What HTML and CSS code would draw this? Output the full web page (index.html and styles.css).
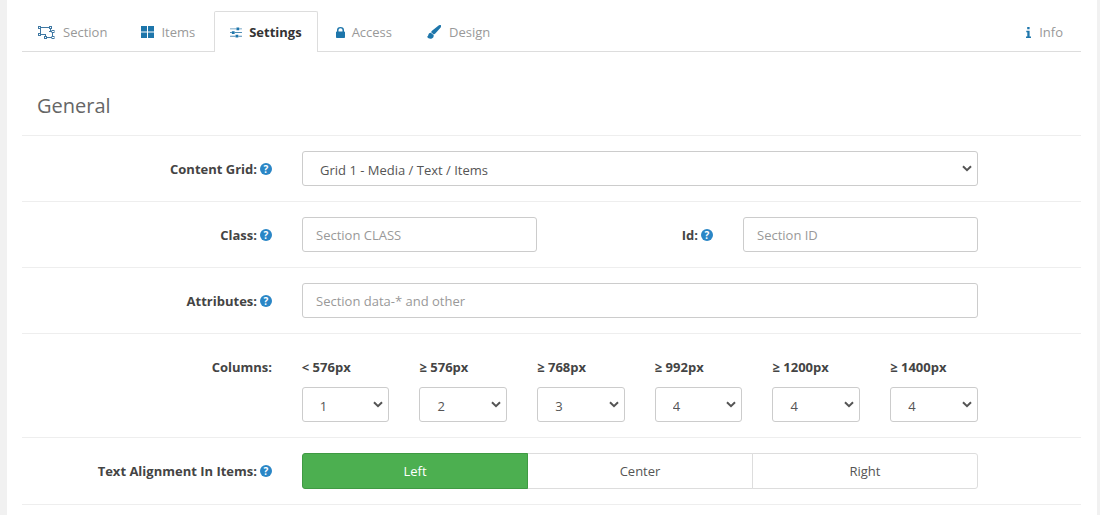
FILE: index.html
```html
<!DOCTYPE html>
<html lang="en">
<head>
<meta charset="utf-8">
<title>Section Settings</title>
<link rel="stylesheet" href="styles.css">
</head>
<body>
<main class="panel">
  <nav class="tabs">
    <a class="tab"><svg class="ico ico-section" viewBox="0 0 17 15"><g fill="#fff" stroke="#3f78a3" stroke-width="1"><path fill="none" d="M2 2.500h10M2.500 3v6M2 9.500h5M12.500 3v3M7.500 9v3M7 12.500h8M14.500 7v5M11 6.500h4"/><rect x=".5" y="1.500" width="2" height="2"/><rect x="11.500" y="1.500" width="2" height="2"/><rect x=".5" y="8.500" width="2" height="2"/><rect x="14" y="5.500" width="2" height="2"/><rect x="6.500" y="11.500" width="2" height="2"/><rect x="14" y="11.500" width="2" height="2"/></g></svg>Section</a>
    <a class="tab tab-wide"><svg class="ico ico-items" viewBox="0 0 13 12"><path fill="#1e76ab" d="M0 0h6v5.500H0zM7 0h6v5.500H7zM0 6.500h6V12H0zM7 6.500h6V12H7z"/></svg>Items</a>
    <a class="tab active"><svg class="ico ico-sliders" viewBox="0 0 13 12"><path fill="#4f8cb5" d="M0 1.500h7v1H0zM10 1.500h3v1h-3zM0 5.500h2v1H0zM5 5.500h8v1H5zM0 9.500h6v1H0zM9 9.500h4v1H9z"/><path fill="#1e76ab" d="M7 .5h3v3H7zM2 4.500h3v3H2zM6 8.500h3v3H6z"/></svg>Settings</a>
    <a class="tab tab-wide"><svg class="ico ico-lock" viewBox="0 0 9 11"><path fill="#1e76ab" d="M1 4.500V3a3.500 3 0 0 1 7 0v1.500h.2a.8.8 0 0 1 .8.8V10.200a.8.8 0 0 1-.8.800H.8a.8.8 0 0 1-.8-.8V5.300a.8.8 0 0 1 .8-.8zM2.500 4.500h4V3a2 1.700 0 0 0-4 0z"/></svg>Access</a>
    <a class="tab"><svg class="ico ico-brush" viewBox="0 0 14 14"><path fill="#1e76ab" d="M13.800.2c-.6-.5-1.500-.2-2.200.3L5 5.700c-.5.400-.8.900-.9 1.500l2.700 2.300c.6-.1 1.100-.4 1.500-.9L13.700 2.400c.5-.8.700-1.600.1-2.200zM3.800 7.700C2.200 7.900 1.400 8.900 1.200 10.300c-.1.800-.5 1.300-1.200 1.500 1 1.600 3 2.300 4.800 1.700 1.500-.5 2.200-2 1.800-3.500z"/></svg>Design</a>
    <a class="tab tab-end"><svg class="ico ico-info" viewBox="0 0 5 11"><path fill="#1e76ab" d="M1.200 0h2.400v2.300H1.200zM.3 3.800h3.300v5.700H5V11H0V9.500h1.300V5.300H.3z"/></svg>Info</a>
  </nav>

  <h2 class="heading">General</h2>

  <section class="row">
    <div class="label"><b>Content Grid:</b><span class="help">?</span></div>
    <div class="control">
      <select class="field select"><option>Grid 1 - Media / Text / Items</option></select>
    </div>
  </section>

  <section class="row">
    <div class="label"><b>Class:</b><span class="help">?</span></div>
    <div class="control split">
      <input class="field" placeholder="Section CLASS">
      <div class="label label-inner"><b>Id:</b><span class="help">?</span></div>
      <input class="field" placeholder="Section ID">
    </div>
  </section>

  <section class="row">
    <div class="label"><b>Attributes:</b><span class="help">?</span></div>
    <div class="control">
      <input class="field" placeholder="Section data-* and other">
    </div>
  </section>

  <section class="row row-top">
    <div class="label"><b>Columns:</b></div>
    <div class="control columns">
      <label class="col"><b>&lt; 576px</b><select class="field select"><option>1</option></select></label>
      <label class="col"><b>≥ 576px</b><select class="field select"><option>2</option></select></label>
      <label class="col"><b>≥ 768px</b><select class="field select"><option>3</option></select></label>
      <label class="col"><b>≥ 992px</b><select class="field select"><option>4</option></select></label>
      <label class="col"><b>≥ 1200px</b><select class="field select"><option>4</option></select></label>
      <label class="col"><b>≥ 1400px</b><select class="field select"><option>4</option></select></label>
    </div>
  </section>

  <section class="row">
    <div class="label"><b>Text Alignment In Items:</b><span class="help">?</span></div>
    <div class="control segments">
      <button class="seg on">Left</button>
      <button class="seg">Center</button>
      <button class="seg">Right</button>
    </div>
  </section>
</main>
</body>
</html>
```
FILE: styles.css
```css
* { box-sizing: border-box; }
html, body { height: 100%; }
body {
  margin: 0;
  background: #f1f1f1;
  font-family: "Open Sans", "Liberation Sans", sans-serif;
  font-size: 13px;
  color: #555;
  overflow: hidden;
}
.panel {
  margin: 0 3px 0 7px;
  background: #fff;
  padding: 11px 16px 0 15px;
  min-height: 100%;
}
.tabs {
  display: flex;
  gap: 2px;
  height: 41px;
  border-bottom: 1px solid #ddd;
  padding-right: 2px;
}
.tab {
  display: flex;
  align-items: center;
  gap: 8px;
  height: 41px;
  padding: 0 15px;
  border: 1px solid transparent;
  border-bottom: 0;
  color: #999;
  line-height: 18px;
}
.tab-wide { padding-right: 16px; }
.tab.active {
  background: #fff;
  border-color: #ddd;
  border-radius: 2px 2px 0 0;
  color: #333;
  font-weight: 700;
}
.tab-end { margin-left: auto; }
.ico { display: block; flex: none; }
.ico-section { width: 17px; height: 15px; }
.ico-items { width: 13px; height: 12px; margin-right: -1px; }
.ico-sliders { width: 12px; height: 11px; margin-right: -1px; }
.ico-lock { width: 9px; height: 11px; margin-right: -1px; }
.ico-brush { width: 14px; height: 14px; }
.ico-info { width: 5px; height: 11px; }

.heading {
  margin: 0;
  height: 83px;
  padding: 40px 15px 0;
  font-size: 20px;
  font-weight: 400;
  line-height: 27px;
  color: #666;
}
.row {
  display: flex;
  align-items: center;
  gap: 30px;
  height: 66px;
  border-top: 1px solid #eee;
  padding-right: 103px;
}
.row:last-child { height: 68px; border-bottom: 1px solid #eee; }
.row-top { align-items: flex-start; height: 104px; padding-top: 24px; }
.label {
  flex: none;
  width: 250px;
  display: flex;
  align-items: center;
  justify-content: flex-end;
  gap: 3px;
  line-height: 18px;
}
.label b, .col b { color: #444; }
.help {
  flex: none;
  width: 12px;
  height: 12px;
  border-radius: 50%;
  background: #2a86c6;
  color: #fff;
  font-size: 10px;
  font-weight: 700;
  line-height: 12px;
  text-align: center;
}
.control { flex: 1; min-width: 0; }
.field {
  display: block;
  width: 100%;
  height: 35px;
  padding: 0 13px;
  background: #fff;
  border: 1px solid #ccc;
  border-radius: 3px;
  font: inherit;
  color: #555;
}
.field::placeholder { color: #999; opacity: 1; }
.select {
  appearance: none;
  padding: 3px 13px 0 17px;
  background: #fff url("data:image/svg+xml,%3Csvg xmlns='http://www.w3.org/2000/svg' viewBox='0 0 10 7'%3E%3Cpath d='M1 1.200l4 4 4-4' fill='none' stroke='%23555' stroke-width='2'/%3E%3C/svg%3E") no-repeat right 5px top 13px / 10px 7px;
}
.split { display: flex; align-items: center; }
.split .field { flex: none; width: 235px; }
.label-inner { flex: 1; width: auto; padding-right: 30px; }
.columns {
  display: grid;
  grid-template-columns: repeat(6, 1fr);
  gap: 30px;
  margin: 0 .2px 0 -.2px;
}
.col { display: block; }
.col b { display: block; height: 29px; line-height: 18px; }
.segments { display: flex; }
.seg {
  flex: 1;
  height: 36px;
  margin-left: -1px;
  padding: 0;
  background: #fff;
  border: 1px solid #ddd;
  font: inherit;
  color: #555;
}
.seg:first-child { margin-left: 0; border-radius: 3px 0 0 3px; }
.seg:last-child { border-radius: 0 3px 3px 0; }
.seg.on {
  flex: 0 0 226px;
  position: relative;
  z-index: 1;
  background: #4caf50;
  border-color: #3f9a43;
  color: #fff;
}
```
